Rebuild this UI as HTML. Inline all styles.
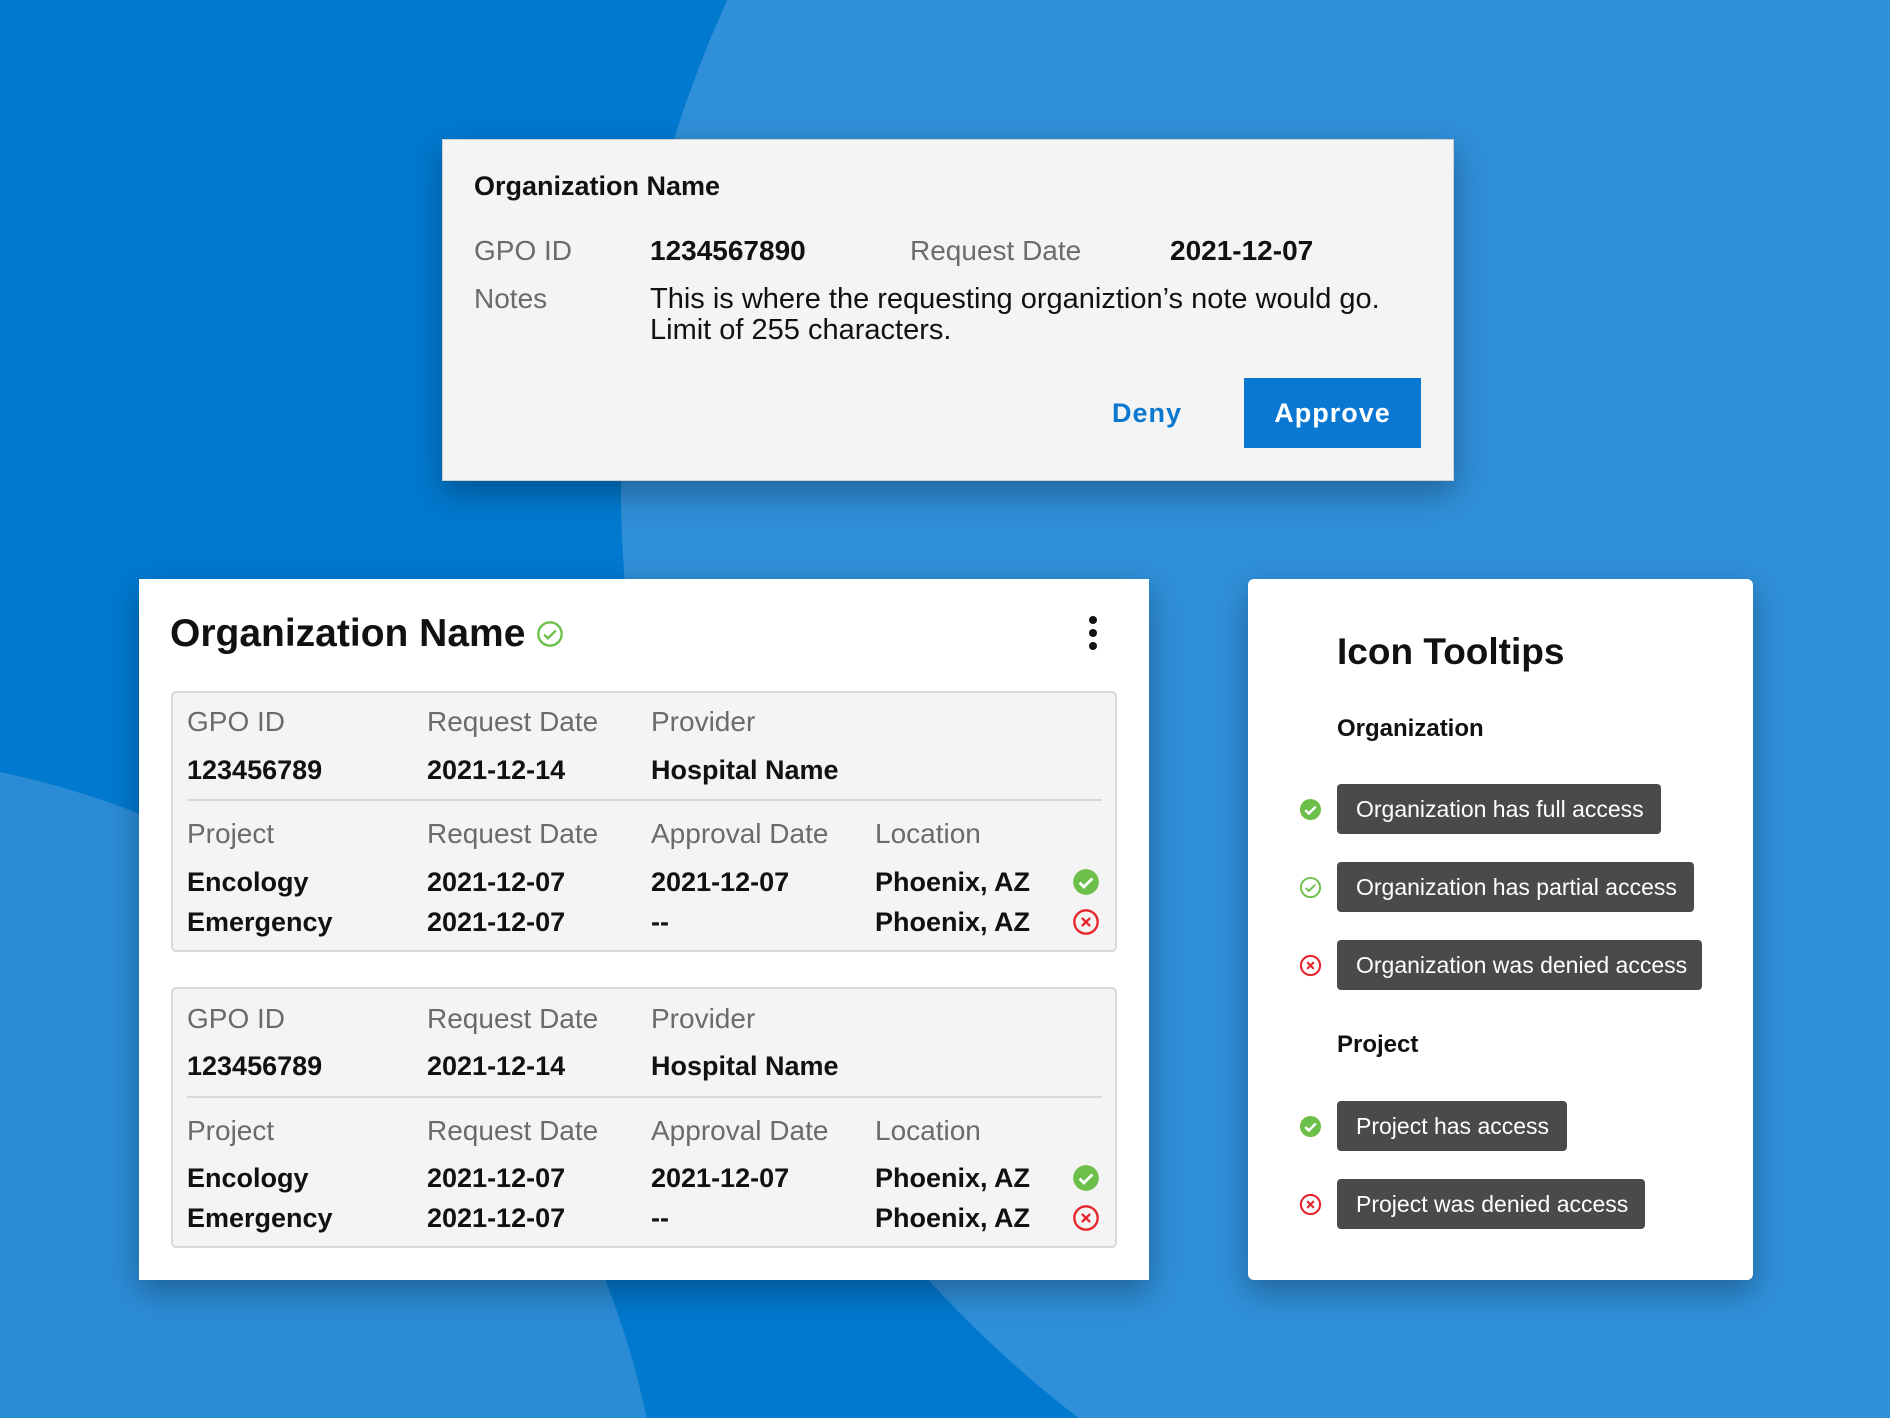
<!DOCTYPE html>
<html><head><meta charset="utf-8"><style>
*{margin:0;padding:0;box-sizing:border-box}
html,body{width:1890px;height:1418px;overflow:hidden}
#w{width:1890px;height:1418px;overflow:hidden;position:relative;background:#0079cf;font-family:"Liberation Sans",Arial,sans-serif;color:#111}
.c{position:absolute;border-radius:50%}
.a{position:absolute;white-space:nowrap;line-height:30px}
.lab{color:#6b6b6b;font-size:28px}
.val{color:#111;font-size:27px;font-weight:bold}
.card{position:absolute;box-shadow:0 12px 30px rgba(0,0,0,.3)}
.box{position:absolute;background:#f4f4f4;border:2px solid #d8d8d8;border-radius:5px}
.div{position:absolute;height:2px;background:#d8d8d8}
.pill{position:absolute;background:#4a4a4a;color:#fff;font-size:23px;border-radius:4px;padding-left:19px;line-height:50px;white-space:nowrap}
svg{position:absolute}
</style></head><body><div id="w">
<div class="c" style="left:621px;top:-686px;width:2348px;height:2348px;background:#2f8fd8"></div>
<div class="c" style="left:-1000px;top:755px;width:1664px;height:1664px;background:#2b8cd6"></div>

<div class="card" style="left:442px;top:139px;width:1012px;height:342px;background:#f4f4f4;border:1px solid #d0d0d0"></div>
<div class="a" style="left:474px;top:171px;font-size:27px;font-weight:bold">Organization Name</div>
<div class="a lab" style="left:474px;top:236px">GPO ID</div>
<div class="a val" style="left:650px;top:236px;font-size:28px">1234567890</div>
<div class="a lab" style="left:910px;top:236px">Request Date</div>
<div class="a val" style="left:1170px;top:236px;font-size:28px">2021-12-07</div>
<div class="a lab" style="left:474px;top:284px">Notes</div>
<div class="a" style="left:650px;top:284px;font-size:29px">This is where the requesting organiztion’s note would go.</div>
<div class="a" style="left:650px;top:315px;font-size:29px">Limit of 255 characters.</div>
<div class="a" style="left:1112px;top:398px;font-size:27px;color:#0a78cf;font-weight:bold;letter-spacing:1px">Deny</div>
<div style="position:absolute;left:1244px;top:378px;width:177px;height:70px;background:#0a78d0;color:#fff;font-size:27px;font-weight:bold;letter-spacing:1px;text-align:center;line-height:70px">Approve</div>

<div class="card" style="left:139px;top:579px;width:1010px;height:701px;background:#fff"></div>
<div class="a" style="left:170px;top:612px;font-size:39px;font-weight:bold;line-height:44px">Organization Name</div>
<svg style="left:536px;top:620px" width="28" height="28" viewBox="0 0 24 24"><circle cx="12" cy="12" r="10" fill="none" stroke="#6cc04a" stroke-width="2"/><path d="M7 12.5l3.2 3.2L17 9" fill="none" stroke="#6cc04a" stroke-width="2"/></svg>
<svg style="left:1085px;top:615px" width="16" height="36"><circle cx="8" cy="5" r="4" fill="#111"/><circle cx="8" cy="18" r="4" fill="#111"/><circle cx="8" cy="31" r="4" fill="#111"/></svg>

<div class="box" style="left:171px;top:691px;width:946px;height:261px"></div>
<div class="div" style="left:187px;top:799px;width:915px"></div>
<div class="box" style="left:171px;top:987px;width:946px;height:261px"></div>
<div class="div" style="left:187px;top:1096px;width:915px"></div>

<div class="a lab" style="left:187px;top:707px">GPO ID</div>
<div class="a lab" style="left:427px;top:707px">Request Date</div>
<div class="a lab" style="left:651px;top:707px">Provider</div>
<div class="a val" style="left:187px;top:755px">123456789</div>
<div class="a val" style="left:427px;top:755px">2021-12-14</div>
<div class="a val" style="left:651px;top:755px">Hospital Name</div>
<div class="a lab" style="left:187px;top:819px">Project</div>
<div class="a lab" style="left:427px;top:819px">Request Date</div>
<div class="a lab" style="left:651px;top:819px">Approval Date</div>
<div class="a lab" style="left:875px;top:819px">Location</div>
<div class="a val" style="left:187px;top:867px">Encology</div>
<div class="a val" style="left:427px;top:867px">2021-12-07</div>
<div class="a val" style="left:651px;top:867px">2021-12-07</div>
<div class="a val" style="left:875px;top:867px">Phoenix, AZ</div>
<div class="a val" style="left:187px;top:907px">Emergency</div>
<div class="a val" style="left:427px;top:907px">2021-12-07</div>
<div class="a val" style="left:651px;top:907px">--</div>
<div class="a val" style="left:875px;top:907px">Phoenix, AZ</div>
<svg style="left:1072px;top:868px" width="28" height="28" viewBox="0 0 24 24"><circle cx="12" cy="12" r="11" fill="#6cc04a"/><path d="M6.5 12.5l3.7 3.7L17.5 9" fill="none" stroke="#fff" stroke-width="2.4"/></svg>
<svg style="left:1072px;top:908px" width="28" height="28" viewBox="0 0 24 24"><circle cx="12" cy="12" r="10" fill="none" stroke="#e5262d" stroke-width="2"/><path d="M8.5 8.5l7 7M15.5 8.5l-7 7" stroke="#e5262d" stroke-width="2"/></svg>

<div class="a lab" style="left:187px;top:1004px">GPO ID</div>
<div class="a lab" style="left:427px;top:1004px">Request Date</div>
<div class="a lab" style="left:651px;top:1004px">Provider</div>
<div class="a val" style="left:187px;top:1051px">123456789</div>
<div class="a val" style="left:427px;top:1051px">2021-12-14</div>
<div class="a val" style="left:651px;top:1051px">Hospital Name</div>
<div class="a lab" style="left:187px;top:1116px">Project</div>
<div class="a lab" style="left:427px;top:1116px">Request Date</div>
<div class="a lab" style="left:651px;top:1116px">Approval Date</div>
<div class="a lab" style="left:875px;top:1116px">Location</div>
<div class="a val" style="left:187px;top:1163px">Encology</div>
<div class="a val" style="left:427px;top:1163px">2021-12-07</div>
<div class="a val" style="left:651px;top:1163px">2021-12-07</div>
<div class="a val" style="left:875px;top:1163px">Phoenix, AZ</div>
<div class="a val" style="left:187px;top:1203px">Emergency</div>
<div class="a val" style="left:427px;top:1203px">2021-12-07</div>
<div class="a val" style="left:651px;top:1203px">--</div>
<div class="a val" style="left:875px;top:1203px">Phoenix, AZ</div>
<svg style="left:1072px;top:1164px" width="28" height="28" viewBox="0 0 24 24"><circle cx="12" cy="12" r="11" fill="#6cc04a"/><path d="M6.5 12.5l3.7 3.7L17.5 9" fill="none" stroke="#fff" stroke-width="2.4"/></svg>
<svg style="left:1072px;top:1204px" width="28" height="28" viewBox="0 0 24 24"><circle cx="12" cy="12" r="10" fill="none" stroke="#e5262d" stroke-width="2"/><path d="M8.5 8.5l7 7M15.5 8.5l-7 7" stroke="#e5262d" stroke-width="2"/></svg>

<div class="card" style="left:1248px;top:579px;width:505px;height:701px;background:#fff;border-radius:6px"></div>
<div class="a" style="left:1337px;top:630px;font-size:37px;font-weight:bold;line-height:44px">Icon Tooltips</div>
<div class="a" style="left:1337px;top:714px;font-size:24px;font-weight:bold">Organization</div>
<div class="a" style="left:1337px;top:1030px;font-size:24px;font-weight:bold">Project</div>

<svg style="left:1299px;top:798px" width="23" height="23" viewBox="0 0 24 24"><circle cx="12" cy="12" r="11" fill="#6cc04a"/><path d="M6.5 12.5l3.7 3.7L17.5 9" fill="none" stroke="#fff" stroke-width="2.6"/></svg>
<div class="pill" style="left:1337px;top:784px;width:324px">Organization has full access</div>
<svg style="left:1299px;top:876px" width="23" height="23" viewBox="0 0 24 24"><circle cx="12" cy="12" r="10" fill="none" stroke="#6cc04a" stroke-width="2"/><path d="M7 12.5l3.2 3.2L17 9" fill="none" stroke="#6cc04a" stroke-width="2"/></svg>
<div class="pill" style="left:1337px;top:862px;width:357px">Organization has partial access</div>
<svg style="left:1299px;top:954px" width="23" height="23" viewBox="0 0 24 24"><circle cx="12" cy="12" r="10" fill="none" stroke="#e5262d" stroke-width="2.2"/><path d="M8.5 8.5l7 7M15.5 8.5l-7 7" stroke="#e5262d" stroke-width="2.2"/></svg>
<div class="pill" style="left:1337px;top:940px;width:365px">Organization was denied access</div>
<svg style="left:1299px;top:1115px" width="23" height="23" viewBox="0 0 24 24"><circle cx="12" cy="12" r="11" fill="#6cc04a"/><path d="M6.5 12.5l3.7 3.7L17.5 9" fill="none" stroke="#fff" stroke-width="2.6"/></svg>
<div class="pill" style="left:1337px;top:1101px;width:230px">Project has access</div>
<svg style="left:1299px;top:1193px" width="23" height="23" viewBox="0 0 24 24"><circle cx="12" cy="12" r="10" fill="none" stroke="#e5262d" stroke-width="2.2"/><path d="M8.5 8.5l7 7M15.5 8.5l-7 7" stroke="#e5262d" stroke-width="2.2"/></svg>
<div class="pill" style="left:1337px;top:1179px;width:308px">Project was denied access</div>
</div></body></html>
